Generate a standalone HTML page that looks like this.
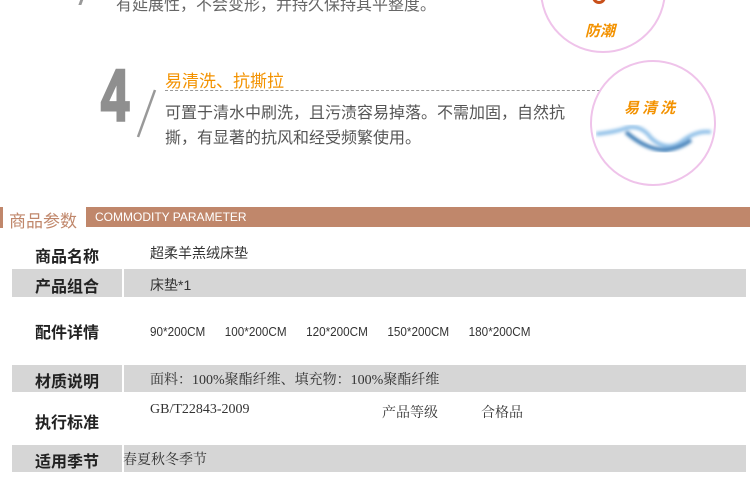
<!DOCTYPE html>
<html><head><meta charset="utf-8">
<style>
*{margin:0;padding:0;box-sizing:border-box}
body{width:750px;height:489px;background:#fff;position:relative;overflow:hidden;font-family:"Liberation Sans","Noto Sans CJK SC",sans-serif;}
.a{position:absolute;white-space:nowrap}
.circ{position:absolute;border:2px solid #efc3ea;border-radius:50%;background:#fff}
.or{color:#f39200;font-weight:bold;font-style:italic}
.g{color:#555;font-size:16px}
.lab{position:absolute;left:12px;width:110px;text-align:center;font-weight:bold;font-size:16px;color:#222;font-family:"Liberation Sans","Noto Sans CJK SC",sans-serif}
.gray{position:absolute;background:#d6d6d6}
.v{position:absolute;font-size:13px;color:#333;font-family:"Liberation Serif","Noto Serif CJK SC",serif}
.s{font-family:"Liberation Sans","Noto Sans CJK SC",sans-serif;font-size:14px}
</style></head><body>
<div class="a" style="left:116px;top:-9px;color:#666;font-size:16px">有延展性，不会变形，并持久保持其平整度。</div>
<div class="a" style="left:80px;top:-4px;width:3px;height:9px;background:#999;transform:skewX(-20deg)"></div>
<div class="circ" style="left:540px;top:-73px;width:126px;height:126px"></div>
<div class="a" style="left:592px;top:-12px;width:14px;height:16px;border:3px solid #c8501a;border-top:none;border-radius:0 0 8px 8px"></div>
<div class="a or" style="left:585px;top:20px;font-size:15px">防潮</div>

<div class="a" style="left:101px;top:60px;font-size:72px;font-weight:bold;color:#8f8f8f;transform:scaleX(0.7);transform-origin:left;line-height:72px;-webkit-text-stroke:3px #8f8f8f">4</div>
<svg class="a" style="left:130px;top:85px" width="30" height="60"><line x1="25" y1="5" x2="8" y2="52" stroke="#999" stroke-width="2.5"/></svg>
<div class="a" style="left:165px;top:67px;color:#f39200;font-size:17px">易清洗、抗撕拉</div>
<div class="a" style="left:165px;top:90px;width:435px;border-top:1px dashed #999"></div>
<div class="a g" style="left:165px;top:99px">可置于清水中刷洗，且污渍容易掉落。不需加固，自然抗</div>
<div class="a g" style="left:165px;top:124px">撕，有显著的抗风和经受频繁使用。</div>

<div class="circ" style="left:590px;top:60px;width:126px;height:126px"></div>
<div class="a or" style="left:624px;top:97px;font-size:15px;letter-spacing:3px">易清洗</div>
<svg class="a" style="left:596px;top:120px" width="118" height="40"><defs><filter id="b"><feGaussianBlur stdDeviation="1.5"/></filter></defs><g filter="url(#b)"><path d="M0 14 Q20 12 30 8 Q45 4 55 18 Q70 32 85 22 Q100 10 115 12" stroke="#8fc0e8" stroke-width="4" fill="none"/><path d="M30 12 Q50 30 70 30 Q85 28 95 20" stroke="#3f7fb8" stroke-width="4" fill="none"/></g></svg>

<div class="a" style="left:0;top:207px;width:3px;height:21px;background:#c0876b"></div>
<div class="a" style="left:9px;top:207px;color:#c0876b;font-size:17px">商品参数</div>
<div class="a" style="left:86px;top:207px;width:664px;height:20px;background:#c0876b"></div>
<div class="a" style="left:95px;top:210px;color:#fff;font-size:12px">COMMODITY PARAMETER</div>

<div class="lab" style="top:243px">商品名称</div>
<div class="v s" style="left:150px;top:243px">超柔羊羔绒床垫</div>

<div class="gray" style="left:12px;top:269px;width:110px;height:28px"></div>
<div class="gray" style="left:124px;top:269px;width:622px;height:28px"></div>
<div class="lab" style="top:273px">产品组合</div>
<div class="v s" style="left:150px;top:275px">床垫*1</div>

<div class="lab" style="top:319px">配件详情</div>
<div class="v" style="left:150px;top:324px;font-family:'Liberation Sans',sans-serif;font-size:13px;transform:scaleX(.9);transform-origin:left">90*200CM&nbsp;&nbsp;&nbsp;&nbsp;&nbsp; 100*200CM&nbsp;&nbsp;&nbsp;&nbsp;&nbsp; 120*200CM&nbsp;&nbsp;&nbsp;&nbsp;&nbsp; 150*200CM&nbsp;&nbsp;&nbsp;&nbsp;&nbsp; 180*200CM</div>

<div class="gray" style="left:12px;top:365px;width:110px;height:27px"></div>
<div class="gray" style="left:124px;top:365px;width:622px;height:27px"></div>
<div class="lab" style="top:368px">材质说明</div>
<div class="v" style="left:150px;top:369px;font-size:14px">面料：100%聚酯纤维、填充物：100%聚酯纤维</div>

<div class="lab" style="top:409px">执行标准</div>
<div class="v" style="left:150px;top:402px;font-size:14px">GB/T22843-2009</div>
<div class="v" style="left:382px;top:402px;font-size:14px">产品等级</div>
<div class="v" style="left:481px;top:402px;font-size:14px">合格品</div>

<div class="gray" style="left:12px;top:445px;width:110px;height:27px"></div>
<div class="gray" style="left:124px;top:445px;width:622px;height:27px"></div>
<div class="lab" style="top:448px">适用季节</div>
<div class="v" style="left:123px;top:449px;font-size:14px">春夏秋冬季节</div>
</body></html>
